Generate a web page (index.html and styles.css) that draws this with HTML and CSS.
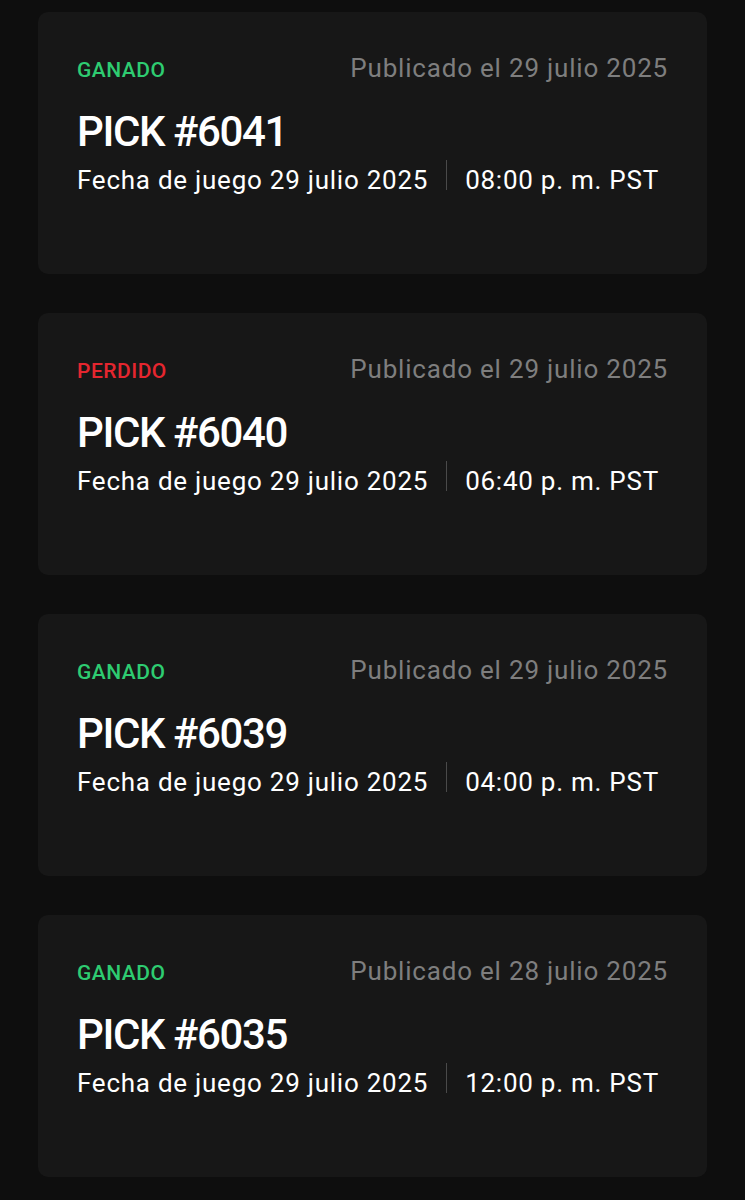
FILE: index.html
```html
<!DOCTYPE html>
<html lang="es">
<head>
  <meta charset="UTF-8">
  <meta name="viewport" content="width=device-width, initial-scale=1.0">
  <title>Picks</title>
  <link rel="stylesheet" href="styles.css">
</head>
<body>
  <div class="picks">
    <div class="pick">
      <div class="pick-top">
        <span class="status won">GANADO</span>
        <span class="published">Publicado el 29 julio 2025</span>
      </div>
      <div class="pick-title">PICK #6041</div>
      <div class="pick-meta">
        <span>Fecha de juego 29 julio 2025</span>
        <span class="sep"></span>
        <span>08:00 p. m. PST</span>
      </div>
    </div>

    <div class="pick">
      <div class="pick-top">
        <span class="status lost">PERDIDO</span>
        <span class="published">Publicado el 29 julio 2025</span>
      </div>
      <div class="pick-title">PICK #6040</div>
      <div class="pick-meta">
        <span>Fecha de juego 29 julio 2025</span>
        <span class="sep"></span>
        <span>06:40 p. m. PST</span>
      </div>
    </div>

    <div class="pick">
      <div class="pick-top">
        <span class="status won">GANADO</span>
        <span class="published">Publicado el 29 julio 2025</span>
      </div>
      <div class="pick-title">PICK #6039</div>
      <div class="pick-meta">
        <span>Fecha de juego 29 julio 2025</span>
        <span class="sep"></span>
        <span>04:00 p. m. PST</span>
      </div>
    </div>

    <div class="pick">
      <div class="pick-top">
        <span class="status won">GANADO</span>
        <span class="published">Publicado el 28 julio 2025</span>
      </div>
      <div class="pick-title">PICK #6035</div>
      <div class="pick-meta">
        <span>Fecha de juego 29 julio 2025</span>
        <span class="sep"></span>
        <span>12:00 p. m. PST</span>
      </div>
    </div>
  </div>
</body>
</html>
```

FILE: styles.css
```css
body {
  margin: 0;
  background-color: #0e0e0e;
  font-family: Roboto, "Noto Sans", sans-serif;
  color: #fff;
}
.picks {
  display: flex;
  flex-direction: column;
  gap: 39px;
  padding: 12px 38px 0;
}
.pick {
  height: 262px;
  box-sizing: border-box;
  padding: 41px 39px 0;
  background-color: #171717;
  border-radius: 10px;
}
.pick-top {
  display: flex;
  justify-content: space-between;
  align-items: baseline;
}
.status {
  font-size: 21px;
  font-weight: 500;
  letter-spacing: 0.5px;
}
.status.won {
  color: #2ecc71;
}
.status.lost {
  color: #e5262f;
}
.published {
  font-size: 26px;
  letter-spacing: 0.8px;
  color: #7e7e7e;
}
.pick-title {
  margin-top: 26px;
  font-size: 42px;
  font-weight: 500;
  letter-spacing: -1.4px;
  line-height: 1.1;
}
.pick-meta {
  display: flex;
  align-items: center;
  gap: 18px;
  margin-top: 10px;
  font-size: 26px;
  letter-spacing: 0.75px;
}
.sep {
  width: 1px;
  height: 30px;
  background-color: #4a4a4a;
  margin-top: -10px;
}
```
